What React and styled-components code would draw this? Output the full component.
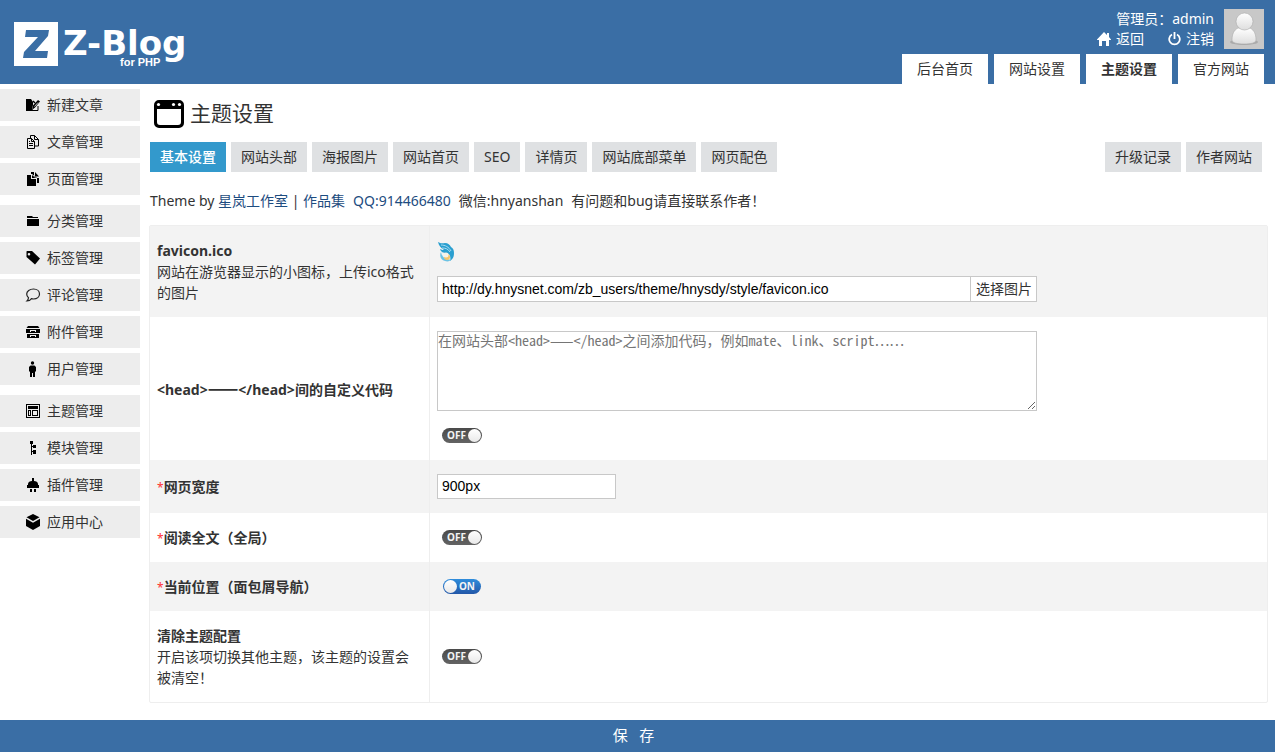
import React, { useState } from 'react';
import styled, { createGlobalStyle, css, ThemeProvider } from 'styled-components';

const theme = {
  blue: '#3a6ea5',
  active: '#3399cc',
  link: '#1d4c80',
  text: '#333333',
  item: '#ededed',
  stripe: '#f3f3f3',
  line: '#eeeeee',
  field: '#c8c8c8',
  font: '"Noto Sans", "Noto Sans CJK SC", sans-serif',
  fontInput: '"Liberation Sans", "Noto Sans CJK SC", sans-serif',
  fontCode: '"Noto Sans Mono CJK SC", "Liberation Mono", "Noto Sans CJK SC", monospace',
};

const GlobalStyle = createGlobalStyle`
  *, *::before, *::after {
    box-sizing: border-box;
  }

  body {
    margin: 0;
    background: white;
    color: ${theme.text};
    font-family: ${theme.font};
    font-size: 14px;
    line-height: 21px;
  }

  a {
    color: inherit;
    text-decoration: none;
  }
`;

const Page = styled.div`
  display: flex;
  flex-direction: column;
  min-height: 100vh;
`;

const Header = styled.header`
  display: flex;
  justify-content: space-between;
  height: 84px;
  padding: 0 11px 0 14px;
  background: ${({ theme }) => theme.blue};
`;

const Logo = styled.a`
  padding-top: 22px;
  svg {
    display: block;
  }
`;

const HeaderRight = styled.div`
  display: flex;
  flex-direction: column;
  justify-content: space-between;
  align-items: flex-end;
  padding-top: 9px;
`;

const UserBox = styled.div`
  display: flex;
  gap: 10px;
  color: white;
`;

const UserInfo = styled.div`
  text-align: right;
  line-height: 20px;
`;

const UserLinks = styled.div`
  display: flex;
  justify-content: flex-end;
  gap: 24px;
`;

const UserLink = styled.a`
  display: flex;
  align-items: center;
  gap: 5px;
`;

const TopNav = styled.nav`
  display: flex;
  gap: 6px;
`;

const TopLink = styled.a`
  padding: 0 15px;
  background: white;
  line-height: 30px;
  ${({ $current }) => $current && css`
    font-weight: bold;
  `}
`;

const Body = styled.div`
  display: flex;
  flex: 1;
`;

const Sidebar = styled.nav`
  flex: none;
  width: 140px;
  padding-top: 5px;
`;

const MenuGroup = styled.ul`
  display: grid;
  gap: 5px;
  margin: 0 0 10px;
  padding: 0;
  list-style: none;
`;

const MenuLink = styled.a`
  display: flex;
  gap: 7px;
  height: 32px;
  padding: 5px 0 0 26px;
  background: ${({ theme }) => theme.item};
  svg {
    flex: none;
    margin-top: 4px;
  }
`;

const Main = styled.main`
  flex: 1;
  min-width: 0;
  padding: 15px 7px 17px 9px;
`;

const Title = styled.h1`
  display: flex;
  gap: 6px;
  margin: 0 0 13px;
  padding-left: 5px;
  font-size: 21px;
  font-weight: normal;
  line-height: 28px;
  height: 30px;
  svg {
    margin-top: 1px;
  }
`;

const Tabs = styled.nav`
  display: flex;
  flex-wrap: wrap;
  gap: 5px;
  padding: 0 6px 0 1px;
`;

const Tab = styled.a`
  padding: 0 10px;
  background: ${({ theme, $active }) => ($active ? theme.active : '#dfe1e3')};
  color: ${({ theme, $active }) => ($active ? 'white' : theme.text)};
  line-height: 30px;
  ${({ $active }) => $active && css`
    font-weight: 500;
  `}
  ${({ $push }) => $push && css`
    margin-left: auto;
  `}
`;

const Credits = styled.p`
  display: flex;
  gap: 8px;
  margin: 0;
  padding: 18px 1px 14px;
  a {
    color: ${({ theme }) => theme.link};
  }
`;

const SettingsTable = styled.table`
  width: 100%;
  border: 1px solid ${({ theme }) => theme.line};
  border-radius: 2px;
  border-spacing: 0;
  table-layout: fixed;
`;

const Row = styled.tr`
  &:nth-child(odd) {
    background: ${({ theme }) => theme.stripe};
  }
`;

const LabelCell = styled.th`
  width: 280px;
  padding: 14px 7px;
  border-right: 1px solid ${({ theme }) => theme.line};
  font-weight: normal;
  text-align: left;
`;

const FieldCell = styled.td`
  padding: 14px 7px;
`;

const FieldLabel = styled.label`
  font-weight: bold;
`;

const Dash = styled.span`
  font-family: "Noto Sans CJK SC", sans-serif;
  font-size: 18px;
  line-height: 1;
`;

const Required = styled.span`
  color: #ff3030;
  font-size: 12px;
  line-height: 1;
`;

const Stack = styled.div`
  display: flex;
  flex-direction: column;
  gap: 14px;
  max-width: 600px;
`;

const IconLine = styled.div`
  display: flex;
  align-items: center;
  height: 21px;
`;

const Upload = styled.div`
  display: flex;
  height: 26px;
`;

const TextInput = styled.input`
  width: ${({ $wide }) => ($wide ? 'auto' : '179px')};
  height: ${({ $wide }) => ($wide ? '26px' : '25px')};
  ${({ $wide }) => $wide && 'flex: 1;'}
  display: block;
  min-width: 0;
  padding: 0 4px 1px;
  border: 1px solid ${({ theme }) => theme.field};
  border-radius: 0;
  background: white;
  color: black;
  font-family: ${({ theme }) => theme.fontInput};
  font-size: 14px;
`;

const UploadButton = styled.button`
  padding: 0 4px 2px 5px;
  border: 1px solid ${({ theme }) => theme.field};
  border-left: 0;
  background: white;
  color: ${({ theme }) => theme.text};
  font-family: inherit;
  font-size: 14px;
  line-height: 21px;
`;

const CodeArea = styled.textarea`
  display: block;
  width: 100%;
  height: 80px;
  padding: 0;
  border: 1px solid ${({ theme }) => theme.field};
  font-family: ${({ theme }) => theme.fontCode};
  font-size: 14px;
  line-height: 16px;
  resize: both;
  &::placeholder {
    color: #757575;
  }
`;

const SwitchLabel = styled.label`
  display: flex;
  align-items: center;
  position: relative;
  width: 40px;
  height: 21px;
  margin-left: 5px;
  cursor: pointer;
`;

const SwitchInput = styled.input`
  position: absolute;
  inset: 0;
  margin: 0;
  opacity: 0;
`;

const SwitchTrack = styled.span`
  display: flex;
  align-items: center;
  justify-content: space-between;
  flex-direction: ${({ $on }) => ($on ? 'row-reverse' : 'row')};
  width: ${({ $on }) => ($on ? 38 : 40)}px;
  height: 15px;
  margin: 0 auto;
  padding: ${({ $on }) => ($on ? '0 6px 0 1px' : '0 1px 0 5px')};
  border-radius: 8px;
  background: ${({ $on }) => ($on ? 'linear-gradient(#2f8ddc, #2257a8)' : 'linear-gradient(#4a4a4a, #636363)')};
  color: #f4f4f4;
  font-size: 10px;
  font-weight: bold;
  line-height: 15px;
  &::after {
    content: '';
    width: 13px;
    height: 13px;
    border-radius: 50%;
    background: linear-gradient(#ffffff, #e9e9e9);
  }
`;

const Footer = styled.footer`
  position: sticky;
  bottom: 0;
  display: grid;
`;

const SaveButton = styled.button`
  height: 32px;
  padding: 0 8px 2px 0;
  border: 0;
  background: ${({ theme }) => theme.blue};
  color: white;
  font-family: inherit;
  font-size: 15px;
  line-height: 30px;
  white-space: pre;
  cursor: pointer;
`;

const icons = {
  write: (
    <>
      <path d="M0 1h5l2 3v3l-1 4 2 2H0z" />
      <path d="M6 12l1-4.500L12 2l2 1.500-5 6z" />
      <path d="M7 3l2 2" stroke="#000" strokeWidth="1.500" />
      <path d="M8.500 8.500l3.500-4" stroke="#ededed" strokeWidth=".8" />
      <path d="M7 12.500h5V8" fill="none" stroke="#000" />
    </>
  ),
  article: (
    <g fill="none" stroke="#000">
      <path d="M1.500 3.500h4l3 3v7h-7z" />
      <path d="M5.500 3.500v3h3M3 8.500h4M3 10.500h4M3 6.500h1" />
      <path d="M4.500 3V.500h4l4 4v6.500H9M8.500.500v4h4" />
    </g>
  ),
  page: (
    <>
      <path d="M1 3h4v4h5v7H1z" />
      <path d="M6 3l3.500 3H6z" />
      <path d="M5 2V0h3v4l2 2h3v5h-2V6L6 2z" />
      <path d="M9 0l4 4.500H9z" />
    </>
  ),
  folder: (
    <>
      <path d="M1 2h5l1 1h5v1H1z" />
      <path d="M1 5h12v7H1z" />
    </>
  ),
  tag: <path fillRule="evenodd" d="M1 0h5l8 7.500L9 13.500.500 6V.500zM3 2a1.300 1.300 0 100 2.600A1.300 1.300 0 003 2z" />,
  comment: (
    <path
      fill="none"
      stroke="#222"
      strokeWidth="1.200"
      d="M7.500 1c3.500 0 6 2.100 6 5s-2.500 5-6 5c-.8 0-1.500-.1-2.200-.3-1 1.700-2.500 2.300-4.300 2.300.9-.8 1.400-1.900 1.500-3.200C1.400 8.900.700 7.600.700 6c0-2.900 3-5 6.800-5z"
    />
  ),
  upload: (
    <path fillRule="evenodd" d="M2 1h10l1.500 2H.500zM0 4h14v4H0zM4 5v2h1V6h4v1h1V5zM1 9h12v4H1zM4 10v2h1v-1h4v1h1v-2z" />
  ),
  user: (
    <>
      <circle cx="6.500" cy="1" r="1.700" />
      <path d="M4.500 3.500h4L10 5v4.500H9V15H7v-4H6v4H4V9.500H3V5z" />
    </>
  ),
  theme: (
    <path fillRule="evenodd" d="M0 0h14v14H0zM1 1v12h12V1zM2 2h10v3H2zM2 6h3v6H2zM3 7v4h1V7zM6 6h6v6H6zM7 7v4h4V7z" />
  ),
  module: <path d="M4 0h3v3H6v2h1V4h3v3H7V6H6v4h1V9h3v4H7v-2H6v3H5V3H4z" />,
  plugin: <path d="M6 0h2v3c2 0 4 1 4 3v1h1v3H1V7h1V6c0-2 2-3 4-3zM4 11h2v3H4zM8 11h2v3H8z" />,
  app: (
    <>
      <path d="M7-1l6.500 3.200L7 6 .500 2.200z" />
      <path d="M0 3.800l7 4 7-4v7.200l-7 4-7-4z" />
    </>
  ),
};

const menu = [
  [['write', '新建文章'], ['article', '文章管理'], ['page', '页面管理']],
  [['folder', '分类管理'], ['tag', '标签管理'], ['comment', '评论管理'], ['upload', '附件管理'], ['user', '用户管理']],
  [['theme', '主题管理'], ['module', '模块管理'], ['plugin', '插件管理'], ['app', '应用中心']],
];

const topLinks = ['后台首页', '网站设置', '主题设置', '官方网站'];
const tabs = ['基本设置', '网站头部', '海报图片', '网站首页', 'SEO', '详情页', '网站底部菜单', '网页配色'];

const MenuIcon = ({ name }) => (
  <svg width="14" height="14" viewBox="0 0 14 14" overflow="visible" aria-hidden="true">
    {icons[name]}
  </svg>
);

const LogoImage = () => (
  <svg width="176" height="50" viewBox="0 0 176 50" overflow="visible" role="img" aria-label="Z-Blog for PHP">
    <path fill="#fff" d="M0 0h44v44H0z" />
    <path fill="#3a6ea5" d="M12 8h23l-1 6-13 15h13l-1 7H9l1-6 14-15H11z" />
    <g fill="#fff">
      <text x="49" y="33" fontFamily="DejaVu Sans" fontWeight="bold" fontSize="34">Z-Blog</text>
      <text x="106" y="44" fontFamily="Liberation Sans" fontWeight="bold" fontSize="11">for PHP</text>
    </g>
  </svg>
);

const HomeIcon = () => (
  <svg width="14" height="14" viewBox="0 0 14 14" fill="#fff" aria-hidden="true">
    <path d="M7 0l3 3V1h2v4l2 2.500V8h-2v6H9V9H5v5H2V8H0v-.500z" />
  </svg>
);

const PowerIcon = () => (
  <svg width="13" height="14" viewBox="0 0 13 14" fill="none" stroke="#fff" strokeWidth="1.800" aria-hidden="true">
    <path d="M4 2.500a5.300 5.300 0 105 0M6.500 0v7" />
  </svg>
);

const Avatar = () => (
  <svg width="40" height="40" viewBox="0 0 40 40" role="img" aria-label="admin">
    <defs>
      <linearGradient id="body" x2="0" y2="1">
        <stop offset="0" stopColor="#fff" />
        <stop offset="1" stopColor="#dedede" />
      </linearGradient>
    </defs>
    <path fill="#c8c8c8" d="M0 0h40v40H0z" />
    <ellipse cx="20" cy="33" rx="14" ry="3" fill="#aaa" />
    <path
      fill="url(#body)"
      stroke="#aaa"
      strokeWidth=".6"
      d="M14 19c-4 2-6 6-6 12 0 3 5 4 12 4s12-1 12-4c0-6-2-10-6-12z"
    />
    <circle cx="20.500" cy="12.500" r="8.500" fill="url(#body)" stroke="#aaa" strokeWidth=".6" />
  </svg>
);

const WindowIcon = () => (
  <svg width="30" height="28" viewBox="0 0 30 28" aria-hidden="true">
    <path
      fillRule="evenodd"
      d="M5 0h20a5 5 0 015 5v18a5 5 0 01-5 5H5a5 5 0 01-5-5V5a5 5 0 015-5zM3 9v13a3 3 0 003 3h18a3 3 0 003-3V9z"
    />
    <g fill="#fff">
      <circle cx="4.500" cy="4.500" r="1.600" />
      <circle cx="19.500" cy="4.500" r="1.600" />
      <circle cx="25.500" cy="4.500" r="1.600" />
    </g>
  </svg>
);

const Favicon = () => (
  <svg width="20" height="20" viewBox="0 0 20 20" role="img" aria-label="favicon">
    <path fill="#2a9fd0" d="M1 0c3 2 5 1 7 1 3 0 5 2 6 4 2 1 3 3 3 6 0 4-1 6-4 8 1-4 0-7-3-8-4 0-6-1-7-4 2 1 3 1 4 1C4 6 2 4 1 0z" />
    <path fill="none" stroke="#a9dcf0" d="M4 3c4 0 8 2 10 6M5 6c4 0 6 1 8 4" />
    <path fill="#6cc3e4" d="M4 10c-2 4 0 8 4 9 3 1 5 0 7-2-5 2-10-1-11-7z" />
    <circle cx="10" cy="15" r="3" fill="#f6c56b" />
    <circle cx="9" cy="13" r="2.500" fill="#f7f3e8" />
  </svg>
);

const Switch = ({ label, defaultOn = false }) => {
  const [on, setOn] = useState(defaultOn);
  return (
    <SwitchLabel>
      <SwitchInput type="checkbox" checked={on} onChange={() => setOn(!on)} aria-label={label} />
      <SwitchTrack $on={on}>{on ? 'ON' : 'OFF'}</SwitchTrack>
    </SwitchLabel>
  );
};

const App = () => (
  <ThemeProvider theme={theme}>
    <GlobalStyle />
    <Page>
      <Header>
        <Logo href="#"><LogoImage /></Logo>
        <HeaderRight>
          <UserBox>
            <UserInfo>
              <div>管理员：admin</div>
              <UserLinks>
                <UserLink href="#"><HomeIcon />返回</UserLink>
                <UserLink href="#"><PowerIcon />注销</UserLink>
              </UserLinks>
            </UserInfo>
            <Avatar />
          </UserBox>
          <TopNav>
            {topLinks.map((name) => (
              <TopLink key={name} href="#" $current={name === '主题设置'}>{name}</TopLink>
            ))}
          </TopNav>
        </HeaderRight>
      </Header>
      <Body>
        <Sidebar>
          {menu.map((group) => (
            <MenuGroup key={group[0][0]}>
              {group.map(([icon, name]) => (
                <li key={icon}>
                  <MenuLink href="#"><MenuIcon name={icon} />{name}</MenuLink>
                </li>
              ))}
            </MenuGroup>
          ))}
        </Sidebar>
        <Main>
          <Title><WindowIcon />主题设置</Title>
          <Tabs>
            {tabs.map((name, i) => (
              <Tab key={name} href="#" $active={i === 0}>{name}</Tab>
            ))}
            <Tab href="#" $push>升级记录</Tab>
            <Tab href="#">作者网站</Tab>
          </Tabs>
          <Credits>
            <span>Theme by <a href="#">星岚工作室</a> | <a href="#">作品集</a></span>
            <a href="#">QQ:914466480</a>
            <span>微信:hnyanshan</span>
            <span>有问题和bug请直接联系作者！</span>
          </Credits>
          <SettingsTable>
            <tbody>
              <Row>
                <LabelCell scope="row">
                  <FieldLabel htmlFor="favicon">favicon.ico</FieldLabel>
                  <br />
                  网站在游览器显示的小图标，上传ico格式的图片
                </LabelCell>
                <FieldCell>
                  <Stack>
                    <IconLine><Favicon /></IconLine>
                    <Upload>
                      <TextInput
                        id="favicon"
                        type="text"
                        $wide
                        defaultValue="http://dy.hnysnet.com/zb_users/theme/hnysdy/style/favicon.ico"
                      />
                      <UploadButton type="button">选择图片</UploadButton>
                    </Upload>
                  </Stack>
                </FieldCell>
              </Row>
              <Row>
                <LabelCell scope="row">
                  <FieldLabel htmlFor="head">&lt;head&gt;<Dash>——</Dash>&lt;/head&gt;间的自定义代码</FieldLabel>
                </LabelCell>
                <FieldCell>
                  <Stack>
                    <CodeArea id="head" placeholder="在网站头部<head>——</head>之间添加代码，例如mate、link、script……" />
                    <Switch label="启用自定义代码" />
                  </Stack>
                </FieldCell>
              </Row>
              <Row>
                <LabelCell scope="row">
                  <Required>*</Required><FieldLabel htmlFor="width">网页宽度</FieldLabel>
                </LabelCell>
                <FieldCell><TextInput id="width" type="text" defaultValue="900px" /></FieldCell>
              </Row>
              <Row>
                <LabelCell scope="row">
                  <Required>*</Required><FieldLabel as="b">阅读全文（全局）</FieldLabel>
                </LabelCell>
                <FieldCell><Switch label="阅读全文（全局）" /></FieldCell>
              </Row>
              <Row>
                <LabelCell scope="row">
                  <Required>*</Required><FieldLabel as="b">当前位置（面包屑导航）</FieldLabel>
                </LabelCell>
                <FieldCell><Switch label="当前位置（面包屑导航）" defaultOn /></FieldCell>
              </Row>
              <Row>
                <LabelCell scope="row">
                  <FieldLabel as="b">清除主题配置</FieldLabel>
                  <br />
                  开启该项切换其他主题，该主题的设置会被清空！
                </LabelCell>
                <FieldCell><Switch label="清除主题配置" /></FieldCell>
              </Row>
            </tbody>
          </SettingsTable>
        </Main>
      </Body>
      <Footer>
        <SaveButton type="submit">保{'   '}存</SaveButton>
      </Footer>
    </Page>
  </ThemeProvider>
);

export default App;
